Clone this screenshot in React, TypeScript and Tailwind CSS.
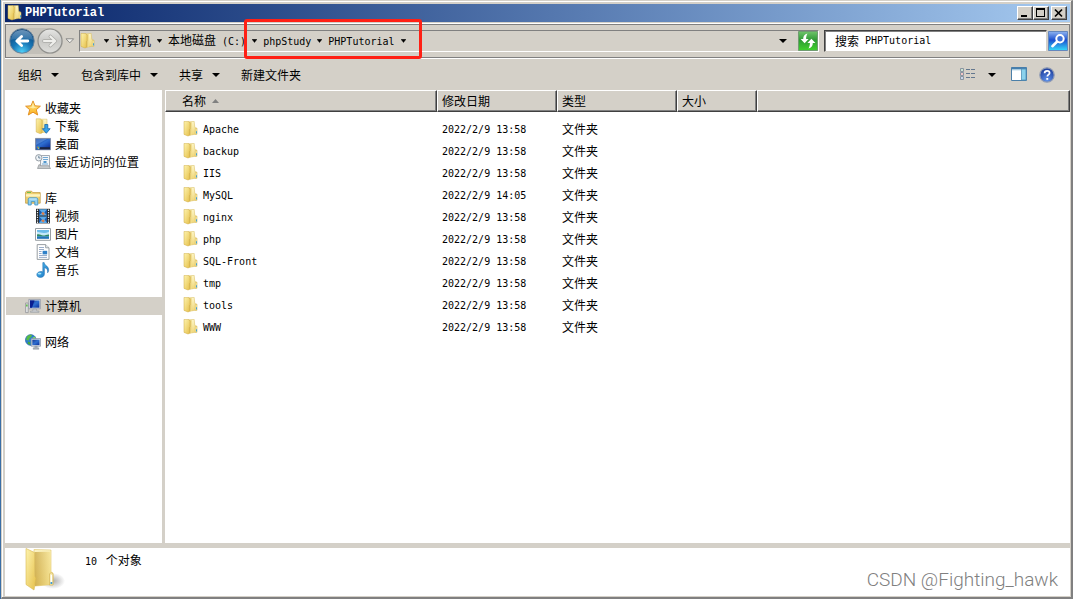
import type { ReactNode } from "react";

const MONO = "font-['DejaVu_Sans_Mono',monospace] text-[10px]";

function Latin({ children }: { children: ReactNode }) {
  return <span className={MONO}>{children}</span>;
}

function Gradients() {
  return (
    <svg className="absolute h-0 w-0" aria-hidden="true">
      <defs>
        <linearGradient id="folderFront" x1="0" y1="0" x2="1" y2="1">
          <stop offset="0" stopColor="#fdf3ae" />
          <stop offset="1" stopColor="#e6c04a" />
        </linearGradient>
        <linearGradient id="folderInner" x1="0" y1="0" x2="1" y2="0">
          <stop offset="0" stopColor="#c9a544" />
          <stop offset="1" stopColor="#f4e190" />
        </linearGradient>
        <linearGradient id="folderBack" x1="0" y1="0" x2="0" y2="1">
          <stop offset="0" stopColor="#fdf6c8" />
          <stop offset="1" stopColor="#f0d677" />
        </linearGradient>
        <radialGradient id="orb" cx="0.5" cy="0.95" r="0.9">
          <stop offset="0" stopColor="#4fd0f8" />
          <stop offset="0.45" stopColor="#1778b8" />
          <stop offset="1" stopColor="#0d4377" />
        </radialGradient>
        <linearGradient id="orbShine" x1="0" y1="0" x2="0" y2="1">
          <stop offset="0" stopColor="#a9c9e4" />
          <stop offset="1" stopColor="#3f79ab" />
        </linearGradient>
        <linearGradient id="orbGray" x1="0" y1="0" x2="0" y2="1">
          <stop offset="0" stopColor="#e6e6e4" />
          <stop offset="0.5" stopColor="#c9c9c6" />
          <stop offset="1" stopColor="#dededb" />
        </linearGradient>
        <linearGradient id="goGreen" x1="0" y1="0" x2="0" y2="1">
          <stop offset="0" stopColor="#6fc46b" />
          <stop offset="0.45" stopColor="#2f9a35" />
          <stop offset="1" stopColor="#3ed22b" />
        </linearGradient>
        <linearGradient id="searchBlue" x1="0" y1="0" x2="0" y2="1">
          <stop offset="0" stopColor="#8fb4f0" />
          <stop offset="0.45" stopColor="#1c50d0" />
          <stop offset="1" stopColor="#35dcfa" />
        </linearGradient>
        <linearGradient id="star" x1="0" y1="0" x2="0" y2="1">
          <stop offset="0" stopColor="#ffe98a" />
          <stop offset="1" stopColor="#fbb01c" />
        </linearGradient>
        <linearGradient id="screen" x1="0" y1="0" x2="1" y2="1">
          <stop offset="0" stopColor="#17368f" />
          <stop offset="0.5" stopColor="#2f6fd0" />
          <stop offset="1" stopColor="#0b2f9a" />
        </linearGradient>
        <linearGradient id="note" x1="0" y1="0" x2="1" y2="1">
          <stop offset="0" stopColor="#5cc4f2" />
          <stop offset="1" stopColor="#1470c0" />
        </linearGradient>
        <radialGradient id="help" cx="0.5" cy="0.85" r="0.8">
          <stop offset="0" stopColor="#5f92ea" />
          <stop offset="1" stopColor="#1b3c9c" />
        </radialGradient>
        <radialGradient id="shade">
          <stop offset="0" stopColor="#8a8a8a" stopOpacity="0.7" />
          <stop offset="1" stopColor="#8a8a8a" stopOpacity="0" />
        </radialGradient>
      </defs>
    </svg>
  );
}

function Folder() {
  return (
    <svg className="h-4 w-4 shrink-0" viewBox="0 0 16 16" aria-hidden="true">
      <path d="M5 .8 11.200.4 11.800 6.500l1.900.5V13L7 14.200z" fill="url(#folderBack)" stroke="#d9bb58" strokeWidth=".5" />
      <path d="M5 1.500 8.800 1V13.800L6 14.500z" fill="url(#folderInner)" />
      <path d="M1 .4h4.200L7 1.800v6l-.6.8V14.400L5 15 1 13.400z" fill="url(#folderFront)" stroke="#cfaa42" strokeWidth=".5" />
      <path d="M12.200 7.400h1.800v6h-1.800z" fill="#f6e7a0" stroke="#d2b04c" strokeWidth=".4" />
      <path d="M13 10.200h1v2.300H13z" fill="#43a0d4" />
    </svg>
  );
}

function BigFolder() {
  return (
    <svg className="h-11 w-10 shrink-0" viewBox="0 0 40 44" aria-hidden="true">
      <ellipse cx="28" cy="33" rx="12" ry="8" fill="url(#shade)" />
      <path d="M9 1.500 26 2V24l2 1v11.500L10 38z" fill="url(#folderBack)" stroke="#dfc468" strokeWidth=".6" />
      <path d="M10 4 25.500 3.500V36L10 38z" fill="url(#folderInner)" opacity=".75" />
      <path d="M1 .5 9.500 4.500V28L11 30 9 42 1 36.500z" fill="url(#folderFront)" stroke="#d8b850" strokeWidth=".6" />
      <path d="M24.500 26c0-1.500 3.500-1.500 3.500 0v11H24.500z" fill="#f7ecb6" stroke="#d7b654" strokeWidth=".7" />
      <path d="M25.700 27h1.300v8h-1.300z" fill="#fff" />
      <path d="M25.500 34h1.800v2H25.500z" fill="#3d9bd2" />
    </svg>
  );
}

function StarIcon() {
  return (
    <svg className="h-4 w-4 shrink-0" viewBox="0 0 16 16" aria-hidden="true">
      <path d="M8 .9 10 5.800 15.400 6.200 11.300 9.700 12.700 15 8 12.200 3.300 15l1.400-5.300L.6 6.200 6 5.800z" fill="url(#star)" stroke="#e08a1c" strokeWidth=".9" strokeLinejoin="round" />
      <path d="M8 3 9.200 6.800 12.600 7 8 8.500 3.600 7 6.800 6.700z" fill="#fff6c0" opacity=".7" />
    </svg>
  );
}

function DownloadIcon() {
  return (
    <svg className="h-4 w-4 shrink-0" viewBox="0 0 16 16" aria-hidden="true">
      <path d="M5 1.200h7v13L6 14.600z" fill="url(#folderBack)" stroke="#d9bb58" strokeWidth=".5" />
      <path d="M5 2l3.500-.4v12.800L6 15z" fill="url(#folderInner)" />
      <path d="M1.200.8h4L7 2.600V15L5 15.600 1.200 14z" fill="url(#folderFront)" stroke="#cfaa42" strokeWidth=".5" />
      <path d="M9.800 6.500h3v4.200h2.400L11.300 15.300 7.400 10.700h2.400z" fill="#38a3e8" stroke="#1565ad" strokeWidth=".8" />
    </svg>
  );
}

function DesktopIcon() {
  return (
    <svg className="h-4 w-4 shrink-0" viewBox="0 0 16 16" aria-hidden="true">
      <path d="M.4 2.400h15.200v11.400H.4z" fill="#16286a" stroke="#8796ad" strokeWidth=".8" />
      <path d="M1 3h14v8.400H1z" fill="url(#screen)" />
      <path d="M1 3h11L1 9z" fill="#7fb2ee" opacity=".45" />
      <path d="M1 11.300h14v2H1z" fill="#1a2440" />
      <circle cx="3" cy="11.700" r="2" fill="#2d78c8" />
      <path d="M2 10.800h1v.9H2z" fill="#f05c28" />
      <path d="M3.100 10.800h1v.9h-1z" fill="#7fd04a" />
      <path d="M3.100 11.900h1v.9h-1z" fill="#ffd23c" />
    </svg>
  );
}

function RecentIcon() {
  return (
    <svg className="h-4 w-4 shrink-0" viewBox="0 0 16 16" aria-hidden="true">
      <path d="M5.500 1.500h9v11h-9z" fill="#f2f5f8" stroke="#8e979f" strokeWidth=".8" />
      <path d="M8 3.500h5M8 5.500h5M7 10h6" stroke="#70a8d4" strokeWidth="1" />
      <path d="M8.500 7h3v2h-3z" fill="#5598cd" />
      <path d="M4 10.500 2.500 14.500h13l-1.800-2.800H6z" fill="#c5c8ca" stroke="#8e9296" strokeWidth=".7" />
      <circle cx="3.800" cy="3.800" r="3.200" fill="#eef3f7" stroke="#8b949c" strokeWidth=".9" />
      <path d="M3.800 1.800v2.200h1.600" fill="none" stroke="#4b6880" strokeWidth=".8" />
    </svg>
  );
}

function LibraryIcon() {
  return (
    <svg className="h-4 w-4 shrink-0" viewBox="0 0 16 16" aria-hidden="true">
      <path d="M.6 13.200V2.200l1-1h5l1.200 1.400h7.400v10.600z" fill="#f0d071" stroke="#bc9236" strokeWidth=".7" />
      <path d="M2 2h4v1H2z" fill="#6fc04c" />
      <path d="M1 4.200h14v2.400H1z" fill="#fdf3bd" />
      <path d="M3.200 15V9.400c0-1 .6-1.600 1.600-1.600h6.400c1 0 1.600.6 1.600 1.600V15h-3v-3.400H6.200V15z" fill="#8fd0f2" stroke="#3a8fc4" strokeWidth=".8" />
      <path d="M4.400 9h7.200" stroke="#def4ff" strokeWidth=".8" />
    </svg>
  );
}

function VideoIcon() {
  return (
    <svg className="h-4 w-4 shrink-0" viewBox="0 0 16 16" aria-hidden="true">
      <path d="M1 .8h14v14.600H1z" fill="#24282c" />
      <path d="M4 1.200h8v6.400H4zM4 8.600h8v6.400H4z" fill="#5aaae8" />
      <path d="m4 1.200 3 3.200L4 7.600zM12 1.200 9.400 4.600 12 7.600zM4 8.600l3 3L4 15zM12 8.600l-2.400 3L12 15z" fill="#1a5cae" />
      <path d="m6.300 5.400 1.600-1.600 2 2-1.700 1.400zM6.200 12.600l2-1.400 1.600 1.600-1.600 1.600z" fill="#d87e4c" />
      <path d="M2.500 1.600v13.600M13.500 1.600v13.600" stroke="#eef2f5" strokeWidth="1.200" strokeDasharray="1.3 1.1" />
    </svg>
  );
}

function PictureIcon() {
  return (
    <svg className="h-4 w-4 shrink-0" viewBox="0 0 16 16" aria-hidden="true">
      <path d="M.5 2.500h15v11.800H.5z" fill="#fff" stroke="#8c9399" strokeWidth=".9" />
      <path d="M2 4h12v8.800H2z" fill="#c4e8f8" />
      <path d="M2 4h12v1.800c-4 2-8 1-12 0z" fill="#6cbcea" />
      <path d="M2 8.600c2-1 4 .6 6 .8s4-1.200 6-1v2H2z" fill="#2f8a62" />
      <path d="M2 10.400h12v2.400H2z" fill="#2375b9" />
    </svg>
  );
}

function DocumentIcon() {
  return (
    <svg className="h-4 w-4 shrink-0" viewBox="0 0 16 16" aria-hidden="true">
      <path d="M2.200.6h8.400l3.400 3.200v11.600H2.200z" fill="#fff" stroke="#8c9399" strokeWidth=".9" />
      <path d="M10.600.6v3.200H14" fill="#e4e8eb" stroke="#8c9399" strokeWidth=".8" />
      <path d="M4 3.500h5M4 5.500h5M4 7.500h2.600M4 9.500h2.600M4 11.500h8M4 13.400h8" stroke="#8fa4c4" strokeWidth=".9" />
      <path d="M7.600 6.800h4.600v3.600H7.600z" fill="#2f80c8" />
    </svg>
  );
}

function MusicIcon() {
  return (
    <svg className="h-4 w-4 shrink-0" viewBox="0 0 16 16" aria-hidden="true">
      <path d="M7.800.6h1.400c.2 3 5 3.600 4.400 8-.1 1-.6 1.800-1 2.200.6-2.800-1-4.600-3.200-5.300V12c0 2-1.600 3.400-4 3.400-2.200 0-3.600-1.100-3.600-2.700 0-1.900 1.900-3.200 4.200-3.200.7 0 1.300.1 1.800.4z" fill="url(#note)" stroke="#1764a8" strokeWidth=".5" />
      <ellipse cx="4.600" cy="11.600" rx="1.800" ry=".9" fill="#a8e4fc" />
    </svg>
  );
}

function ComputerIcon() {
  return (
    <svg className="h-4 w-4 shrink-0" viewBox="0 0 16 16" aria-hidden="true">
      <path d="M.6 5h2.600v9.600H.6z" fill="#e2e4e5" stroke="#8a8d90" strokeWidth=".7" />
      <path d="M1.100 6.500h1.500v2H1.100z" fill="#58bd3e" />
      <path d="M3.800 1.400h11.600v9.400H3.800z" fill="#d9dde4" stroke="#8b92a4" strokeWidth=".7" />
      <path d="M5 2.500h9.400v7.200H5z" fill="url(#screen)" />
      <path d="M5 2.500h4.500L7 9.700H5z" fill="#0a1e90" />
      <path d="M8 11h3.400l.4 2H14v1.400H5.400V13h2.200z" fill="#c3c6ca" stroke="#92969a" strokeWidth=".5" />
    </svg>
  );
}

function NetworkIcon() {
  return (
    <svg className="h-4 w-4 shrink-0" viewBox="0 0 16 16" aria-hidden="true">
      <circle cx="5.800" cy="6" r="5.400" fill="#2b7fd0" stroke="#2760a4" strokeWidth=".6" />
      <path d="M2 2.600c2-2 4-2 5-1.400L6 3.200 4.400 4.400 4 6.600 1 6z" fill="#58bd44" />
      <path d="M7.500 3.400 10 2.600l1 3-2 1.200z" fill="#7dd45a" />
      <path d="M3 7.500l2.500 1L5 11l-2.400-1.200z" fill="#46ab3c" />
      <path d="M6.200 4.600h9.400v7.600H6.200z" fill="#dce2ea" stroke="#7f8ba0" strokeWidth=".7" />
      <path d="M7.300 5.700h7.200v5.400H7.300z" fill="url(#screen)" />
      <path d="M9.800 12.300h2.400v1.500h1.600v1.500H8.200v-1.500h1.600z" fill="#a8b0ba" stroke="#7f8790" strokeWidth=".4" />
    </svg>
  );
}

function Caret({ small }: { small?: boolean }) {
  return small ? (
    <svg className="h-1 w-[5px] shrink-0" viewBox="0 0 5 4" aria-hidden="true">
      <path d="M0 .3h5L2.500 3.500z" fill="#000" stroke="#000" strokeWidth=".4" />
    </svg>
  ) : (
    <svg className="h-1 w-2 shrink-0" viewBox="0 0 8 4" aria-hidden="true">
      <path d="M0 0h8L4 4z" fill="#000" />
    </svg>
  );
}

const RAISED =
  "flex h-3.5 w-4 items-center justify-center border border-t-white border-l-white border-r-[#404040] border-b-[#404040] bg-[#d4d0c8] shadow-[inset_-1px_-1px_0_#808080]";

function TitleBar() {
  return (
    <header className="flex h-[18px] items-center bg-linear-to-r from-[#0a246a] to-[#a6caf0] pr-[3px] pl-[2px]">
      <Folder />
      <h1 className="ml-0.5 flex-1 font-['Liberation_Mono',monospace] text-[12px] leading-none font-bold text-white">PHPTutorial</h1>
      <button type="button" aria-label="最小化" className={RAISED}>
        <svg className="h-2.5 w-3" viewBox="0 0 12 10"><path d="M2 7h6v2H2z" /></svg>
      </button>
      <button type="button" aria-label="最大化" className={RAISED}>
        <svg className="h-2.5 w-3" viewBox="0 0 12 10"><path d="M1 0h9v9H1zM2 2v6h7V2z" fillRule="evenodd" /></svg>
      </button>
      <button type="button" aria-label="关闭" className={RAISED + " ml-0.5"}>
        <svg className="h-2.5 w-3" viewBox="0 0 12 10"><path d="m2 1.500 7 7M9 1.500l-7 7" stroke="#000" strokeWidth="1.700" /></svg>
      </button>
    </header>
  );
}

function NavButtons() {
  return (
    <div className="flex items-center rounded-full bg-[#c3c0b9]">
      <button type="button" aria-label="后退" className="block">
        <svg className="h-[26px] w-[26px]" viewBox="0 0 26 26">
          <circle cx="13" cy="13" r="12.200" fill="url(#orb)" stroke="#69829a" strokeWidth="1" />
          <path d="M2 12C2.500 5.500 7 2 13 2s10.500 3.500 11 10c-6-2-16-2-22 0z" fill="url(#orbShine)" opacity=".6" />
          <path d="M18.800 13H8.500M12.600 8.500 7.800 13l4.800 4.500" fill="none" stroke="#fff" strokeWidth="2.800" strokeLinejoin="round" strokeLinecap="round" />
        </svg>
      </button>
      <button type="button" aria-label="前进" className="ml-0.5 block">
        <svg className="h-[26px] w-[26px]" viewBox="0 0 26 26">
          <circle cx="13" cy="13" r="12" fill="url(#orbGray)" stroke="#8f8f8c" strokeWidth="1.200" />
          <path d="M7 13h10.300M13.400 8.500l4.800 4.500-4.800 4.500" fill="none" stroke="#aaaaa7" strokeWidth="3.600" strokeLinejoin="round" strokeLinecap="round" />
          <path d="M7 13h10.300M13.400 8.500l4.800 4.500-4.800 4.500" fill="none" stroke="#efefec" strokeWidth="2.200" strokeLinejoin="round" strokeLinecap="round" />
        </svg>
      </button>
    </div>
  );
}

function Crumb({ children }: { children: ReactNode }) {
  return (
    <li className="flex items-center gap-1.5">
      <a href="#path" className="whitespace-pre">{children}</a>
      <Caret small />
    </li>
  );
}

function NavBar() {
  return (
    <div className="mt-px flex h-9 items-center border-t border-b border-t-white border-b-white">
      <div className="flex h-full flex-1 items-center border border-[#808080] pr-px pl-[3px]">
        <NavButtons />
        <button type="button" aria-label="最近的页面" className="ml-0.5 flex h-5 w-2.5 items-center">
          <svg className="h-1.5 w-2.5" viewBox="0 0 10 6"><path d="M1 .8h7.600L4.800 4.800z" fill="#f4f3f0" stroke="#808080" strokeWidth=".9" /></svg>
        </button>
        <div className="ml-1 flex h-[22px] flex-1 items-center border border-t-[#808080] border-l-[#808080] border-r-white border-b-white">
          <Folder />
          <nav aria-label="地址" className="ml-2 flex flex-1 items-center">
            <Caret small />
            <ol className="ml-1.5 flex items-center gap-1.5">
              <Crumb>计算机</Crumb>
              <Crumb>本地磁盘<Latin> (C:)</Latin></Crumb>
              <Crumb><Latin>phpStudy</Latin></Crumb>
              <Crumb><Latin>PHPTutorial</Latin></Crumb>
            </ol>
          </nav>
          <button type="button" aria-label="以前的位置" className="mr-[11px] flex h-5 w-2 items-center"><Caret /></button>
          <button type="button" aria-label="刷新">
            <svg className="block h-5 w-5" viewBox="0 0 20 20">
              <path d="M.5.500h19v19H.5z" fill="url(#goGreen)" stroke="#6f9c70" />
              <path d="M9.500 2.500C6.500 3.200 5.200 5 5.200 8H2.600l4 4.200 4-4.200H8.100c0-2.200.4-3.600 1.400-5.500z" fill="#fff" />
              <path d="M10.500 17.500c3-.7 4.300-2.500 4.300-5.500h2.600l-4-4.200-4 4.200h2.500c0 2.200-.4 3.600-1.400 5.500z" fill="#fff" />
            </svg>
          </button>
        </div>
        <form className="ml-[5px] flex items-center gap-px" onSubmit={(e) => e.preventDefault()}>
          <label className="flex h-[22px] w-[223px] items-center border border-t-[#404040] border-l-[#404040] border-r-[#d4d0c8] border-b-[#d4d0c8] bg-white px-2.5 shadow-[inset_1px_1px_0_#808080]">
            <span>搜索</span>
            <input type="text" aria-label="搜索" defaultValue="PHPTutorial" className="ml-1.5 min-w-0 flex-1 font-['DejaVu_Sans_Mono',monospace] text-[10px] outline-none" />
          </label>
          <button type="submit" aria-label="开始搜索">
            <svg className="block h-5 w-5" viewBox="0 0 20 20">
              <path d="M.5.500h19v19H.5z" fill="url(#searchBlue)" stroke="#6487bd" />
              <circle cx="12" cy="7.800" r="3.700" fill="#3f72d8" stroke="#fff" strokeWidth="2" />
              <path d="m9 10.800-4.600 4.400" stroke="#fff" strokeWidth="2.600" strokeLinecap="round" />
            </svg>
          </button>
        </form>
      </div>
    </div>
  );
}

function Toolbar() {
  return (
    <div className="flex h-[31px] items-center pr-[15px] pl-[13px]">
      <button type="button" className="flex items-center gap-[9px]">组织<Caret /></button>
      <button type="button" className="ml-[22px] flex items-center gap-[9px]">包含到库中<Caret /></button>
      <button type="button" className="ml-[21px] flex items-center gap-[9px]">共享<Caret /></button>
      <button type="button" className="ml-[21px]">新建文件夹</button>
      <span className="flex-1" />
      <button type="button" aria-label="更改视图" className="flex items-center gap-3">
        <svg className="h-4 w-4" viewBox="0 0 16 16">
          <path d="M.5 1.500h3v3h-3zM.5 5.500h3v3h-3zM.5 9.500h3v3h-3z" fill="#fff" stroke="#7f8b99" strokeWidth=".9" />
          <path d="M1.500 2.500h1v1h-1z" fill="#3c9a48" />
          <path d="M1.500 6.500h1v1h-1z" fill="#d42020" />
          <path d="M1.500 10.500h1v1h-1z" fill="#2c60b4" />
          <path d="M6 2.500h4M11 2.500h4M6 6.500h4M11 6.500h4M6 10.500h4M11 10.500h4" stroke="#64788f" strokeWidth="1" />
        </svg>
        <Caret />
      </button>
      <button type="button" aria-label="预览窗格" className="ml-[15px]">
        <svg className="block h-4 w-4" viewBox="0 0 16 16">
          <path d="M.5 .5h15v13H.5z" fill="#fff" stroke="#4b7fa8" />
          <path d="M.5 .5h15v1.800H.5z" fill="#467fae" />
          <path d="M1 2.300h9v1H1z" fill="#9cc5dd" />
          <path d="M10.500 2h4.500v11h-4.500z" fill="#8bd2ec" stroke="#4f8fb8" strokeWidth=".8" />
        </svg>
      </button>
      <button type="button" aria-label="帮助" className="ml-3">
        <svg className="block h-4 w-4" viewBox="0 0 16 16">
          <circle cx="8" cy="8" r="7.200" fill="url(#help)" stroke="#8e9ab4" strokeWidth="1.200" />
          <path d="M5.600 6.200c0-1.600 1.100-2.400 2.500-2.400s2.500.8 2.500 2.100c0 1.700-2.300 1.800-2.300 3.700" fill="none" stroke="#fff" strokeWidth="1.700" />
          <path d="M7.300 11h1.900v1.800H7.300z" fill="#fff" />
        </svg>
      </button>
    </div>
  );
}

type Item = { label: string; icon: ReactNode };
type Group = { head: Item; items: Item[]; selected?: boolean };

const groups: Group[] = [
  {
    head: { label: "收藏夹", icon: <StarIcon /> },
    items: [
      { label: "下载", icon: <DownloadIcon /> },
      { label: "桌面", icon: <DesktopIcon /> },
      { label: "最近访问的位置", icon: <RecentIcon /> },
    ],
  },
  {
    head: { label: "库", icon: <LibraryIcon /> },
    items: [
      { label: "视频", icon: <VideoIcon /> },
      { label: "图片", icon: <PictureIcon /> },
      { label: "文档", icon: <DocumentIcon /> },
      { label: "音乐", icon: <MusicIcon /> },
    ],
  },
  { head: { label: "计算机", icon: <ComputerIcon /> }, items: [], selected: true },
  { head: { label: "网络", icon: <NetworkIcon /> }, items: [] },
];

function Sidebar() {
  return (
    <nav aria-label="导航窗格" className="flex w-[157px] shrink-0 flex-col gap-[18px] bg-white pt-[9px]">
      {groups.map((g) => (
        <ul key={g.head.label}>
          <li>
            <a href="#place" className={g.selected ? "ml-px flex h-[18px] items-center gap-1 bg-[#d4d0c8] pl-[19px]" : "flex h-[18px] items-center gap-1 pl-5"}>
              {g.head.icon}
              {g.head.label}
            </a>
          </li>
          {g.items.map((i) => (
            <li key={i.label}>
              <a href="#place" className="flex h-[18px] items-center gap-1 pl-[30px]">
                {i.icon}
                {i.label}
              </a>
            </li>
          ))}
        </ul>
      ))}
    </nav>
  );
}

const files = [
  ["Apache", "2022/2/9 13:58"],
  ["backup", "2022/2/9 13:58"],
  ["IIS", "2022/2/9 13:58"],
  ["MySQL", "2022/2/9 14:05"],
  ["nginx", "2022/2/9 13:58"],
  ["php", "2022/2/9 13:58"],
  ["SQL-Front", "2022/2/9 13:58"],
  ["tmp", "2022/2/9 13:58"],
  ["tools", "2022/2/9 13:58"],
  ["WWW", "2022/2/9 13:58"],
];

const TH =
  "h-[22px] border border-t-white border-l-white border-r-[#404040] border-b-[#404040] bg-[#d4d0c8] p-0 pl-1 text-left font-normal shadow-[inset_-1px_-1px_0_#808080]";

function FileList() {
  return (
    <main className="min-w-0 flex-1 bg-white">
      <table className="w-full table-fixed border-separate border-spacing-0">
        <colgroup>
          <col className="w-[272px]" />
          <col className="w-[120px]" />
          <col className="w-[120px]" />
          <col className="w-[80px]" />
          <col />
        </colgroup>
        <thead>
          <tr>
            <th className={TH}>
              <button type="button" className="ml-3 flex items-center gap-1.5">
                名称
                <svg className="h-1 w-[7px]" viewBox="0 0 7 4" aria-hidden="true"><path d="M0 4h7L3.500 0z" fill="#808080" /></svg>
              </button>
            </th>
            <th className={TH}>修改日期</th>
            <th className={TH}>类型</th>
            <th className={TH}>大小</th>
            <td className={TH} />
          </tr>
        </thead>
        <tbody>
          <tr aria-hidden="true"><td colSpan={5} className="h-1.5 p-0" /></tr>
          {files.map(([name, date]) => (
            <tr key={name}>
              <td className="h-[22px] p-0">
                <span className="flex items-center gap-1 pl-[18px]">
                  <Folder />
                  <span><Latin>{name}</Latin></span>
                </span>
              </td>
              <td className="h-[22px] p-0 pl-[5px]"><Latin>{date}</Latin></td>
              <td className="h-[22px] p-0 pl-[5px]">文件夹</td>
              <td className="p-0" />
              <td className="p-0" />
            </tr>
          ))}
        </tbody>
      </table>
    </main>
  );
}

export default function App() {
  return (
    <div className="relative flex min-h-screen flex-col border-l border-[#3a6ea5] bg-[#d4d0c8] font-['Noto_Sans_CJK_SC',sans-serif] text-[12px] leading-4 text-black">
      <Gradients />
      <div className="flex flex-1 flex-col border-t border-r-2 border-b-2 border-l border-t-[#d4d0c8] border-r-[#808080] border-b-[#808080] border-l-[#d4d0c8]">
        <div className="flex flex-1 flex-col border-t border-l border-white pt-[2px] pr-px pb-px pl-[2px]">
          <TitleBar />
          <NavBar />
          <Toolbar />
          <div className="flex flex-1 gap-[3px]">
            <Sidebar />
            <FileList />
          </div>
          <footer className="mt-[5px] flex h-12 items-start justify-between bg-white pl-5">
            <div className="flex items-start gap-5">
              <BigFolder />
              <p className="mt-1 whitespace-pre"><Latin>10 </Latin> 个对象</p>
            </div>
            <p className="mt-5 mr-3 font-[Roboto,sans-serif] text-[19px] leading-6 font-light text-[#808080]">CSDN @Fighting_hawk</p>
          </footer>
        </div>
      </div>
      <div className="pointer-events-none absolute top-[19px] left-[243px] h-10 w-[178px] rounded-[3px] border-3 border-[#ff2015]" />
    </div>
  );
}
